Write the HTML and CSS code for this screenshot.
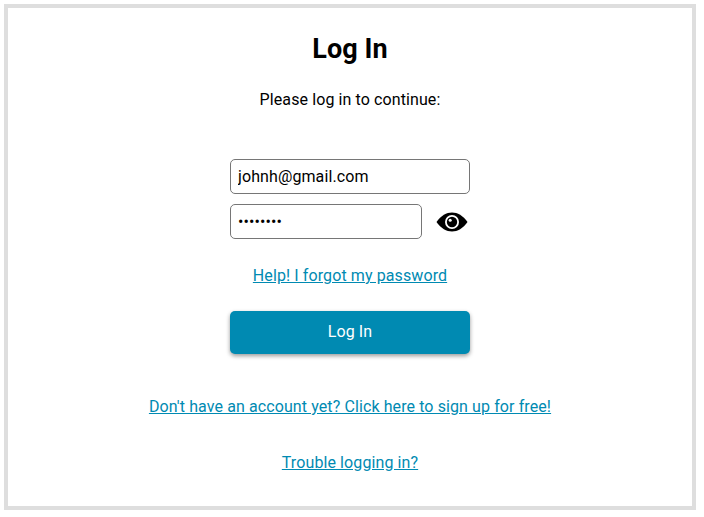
FILE: index.html
```html
<!DOCTYPE html>
<html>
   <head>
      <title>Log In</title>
      <meta name="viewport" content="width=device-width, initial-scale=1">
      <link rel="stylesheet" href="styles.css">
   </head>
   <body>
      <div class="container">
         <h1 class="title">Log In</h1>
         <p class="subtitle">Please log in to continue:</p>
         <form class="login-form">
            <input class="text-input" type="text" value="johnh@gmail.com">
            <div class="password-row">
               <input class="text-input password-input" type="password" value="password">
               <svg class="eye-icon" viewBox="0 0 32 20" aria-hidden="true">
                  <path d="M0.5 10C5 3.500 10.500 0.500 16 0.500S27 3.500 31.500 10C27 16.500 21.500 19.500 16 19.500S5 16.500 0.5 10z"/>
                  <circle class="eye-white" cx="16" cy="10" r="7"/>
                  <circle cx="16" cy="10" r="5.2"/>
                  <circle class="eye-white" cx="14.200" cy="8.200" r="1.500"/>
               </svg>
            </div>
            <a href="#" class="link forgot-link">Help! I forgot my password</a>
            <button class="login-button" type="button">Log In</button>
         </form>
         <a href="#" class="link signup-link">Don't have an account yet? Click here to sign up for free!</a>
         <a href="#" class="link trouble-link">Trouble logging in?</a>
      </div>
   </body>
</html>
```
FILE: styles.css
```css
html, body {
   margin: 0;
   height: 100%;
}

body {
   padding: 4px;
   box-sizing: border-box;
   background-color: #fff;
   font-family: Roboto, sans-serif;
   color: #000;
}

.container {
   width: 692px;
   height: 506px;
   box-sizing: border-box;
   border: 4px solid #dedede;
   display: flex;
   flex-direction: column;
   align-items: center;
   padding-top: 24px;
   letter-spacing: 0.1px;
}

.title {
   margin: 0;
   font-size: 27px;
   line-height: 34px;
   font-weight: 700;
}

.subtitle {
   margin: 23px 0 0;
   font-size: 16px;
   line-height: 22px;
}

.login-form {
   width: 240px;
   margin-top: 48px;
   display: flex;
   flex-direction: column;
   align-items: center;
}

.text-input {
   width: 100%;
   height: 35px;
   box-sizing: border-box;
   padding: 0 7px;
   border: 1px solid #767676;
   border-radius: 5px;
   outline: none;
   font-family: Roboto, sans-serif;
   font-size: 16px;
   letter-spacing: 0.1px;
   color: #000;
}

.password-row {
   width: 100%;
   margin-top: 10px;
   display: flex;
   align-items: center;
   justify-content: space-between;
}

.password-input {
   width: 192px;
}

.eye-icon {
   width: 32px;
   height: 20px;
   margin-right: 2px;
   fill: #000;
}

.eye-white {
   fill: #fff;
}

.link {
   font-size: 16px;
   line-height: 22px;
   color: #008ab2;
   text-decoration: underline;
}

.forgot-link {
   margin-top: 26px;
}

.login-button {
   width: 100%;
   height: 43px;
   margin-top: 24px;
   padding: 0 0 2px;
   border: none;
   border-radius: 5px;
   background-color: #008ab2;
   box-shadow: 0 2px 4px rgba(0, 0, 0, 0.4);
   font-family: Roboto, sans-serif;
   font-size: 16px;
   letter-spacing: 0.1px;
   color: #fff;
}

.signup-link {
   margin-top: 42px;
}

.trouble-link {
   margin-top: 34px;
}
```
